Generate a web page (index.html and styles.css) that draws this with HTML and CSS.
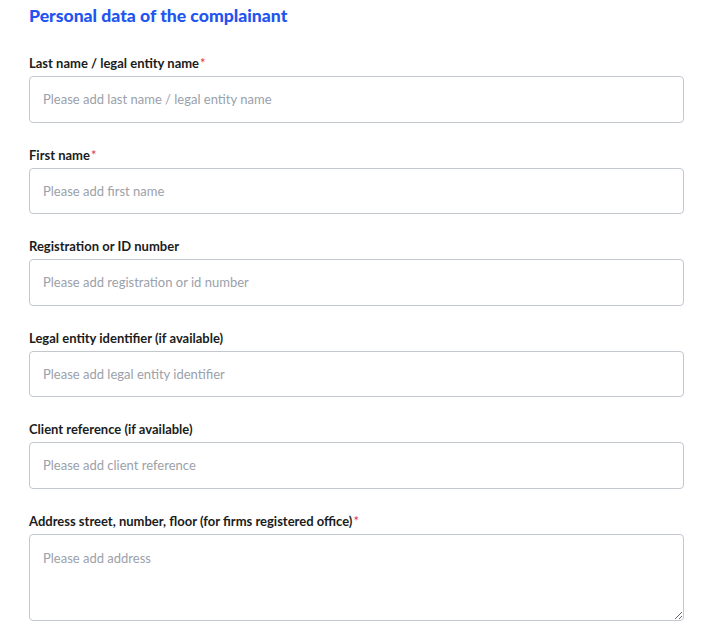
FILE: index.html
```html
<!DOCTYPE html>
<html lang="en">
<head>
<meta charset="utf-8">
<title>Personal data of the complainant</title>
<link rel="stylesheet" href="styles.css">
</head>
<body>
<main class="form">
  <h2 class="title">Personal data of the complainant</h2>
  <div class="field">
    <label class="label" for="f1">Last name / legal entity name<span class="req">*</span></label>
    <input class="input" id="f1" type="text" placeholder="Please add last name / legal entity name">
  </div>
  <div class="field">
    <label class="label" for="f2">First name<span class="req">*</span></label>
    <input class="input" id="f2" type="text" placeholder="Please add first name">
  </div>
  <div class="field">
    <label class="label" for="f3">Registration or ID number</label>
    <input class="input" id="f3" type="text" placeholder="Please add registration or id number">
  </div>
  <div class="field">
    <label class="label" for="f4">Legal entity identifier (if available)</label>
    <input class="input" id="f4" type="text" placeholder="Please add legal entity identifier">
  </div>
  <div class="field">
    <label class="label" for="f5">Client reference (if available)</label>
    <input class="input" id="f5" type="text" placeholder="Please add client reference">
  </div>
  <div class="field">
    <label class="label" for="f6">Address street, number, floor (for firms registered office)<span class="req">*</span></label>
    <textarea class="input textarea" id="f6" placeholder="Please add address"></textarea>
  </div>
</main>
</body>
</html>
```
FILE: styles.css
```css
* { box-sizing: border-box; }
body {
  margin: 0;
  background: #fff;
  font-family: Lato, "Noto Sans", sans-serif;
  color: #1a1c20;
}
.form {
  padding: 4px 35px 0 29px;
  display: flex;
  flex-direction: column;
}
.title {
  margin: 0 0 26px;
  font-size: 17.6px;
  line-height: 24px;
  font-weight: 900;
  color: #2254f0;
}
.field {
  display: flex;
  flex-direction: column;
  margin-bottom: 23px;
}
.label {
  font-size: 13px;
  font-weight: 700;
  line-height: 18px;
  margin-bottom: 4px;
  color: #1a1c20;
}
.req { color: #e0393e; margin-left: 1px; font-weight: 400; }
.input {
  width: 100%;
  height: 46.5px;
  border: 1px solid #c3c8cf;
  border-radius: 4px;
  padding: 0 13px;
  font-family: inherit;
  font-size: 13px;
  color: #1a1c20;
  background: #fff;
  outline: none;
}
.input::placeholder { color: #9ba1aa; }
.textarea {
  height: 87px;
  padding: 14px 13px;
  resize: vertical;
  line-height: 18px;
}
```
